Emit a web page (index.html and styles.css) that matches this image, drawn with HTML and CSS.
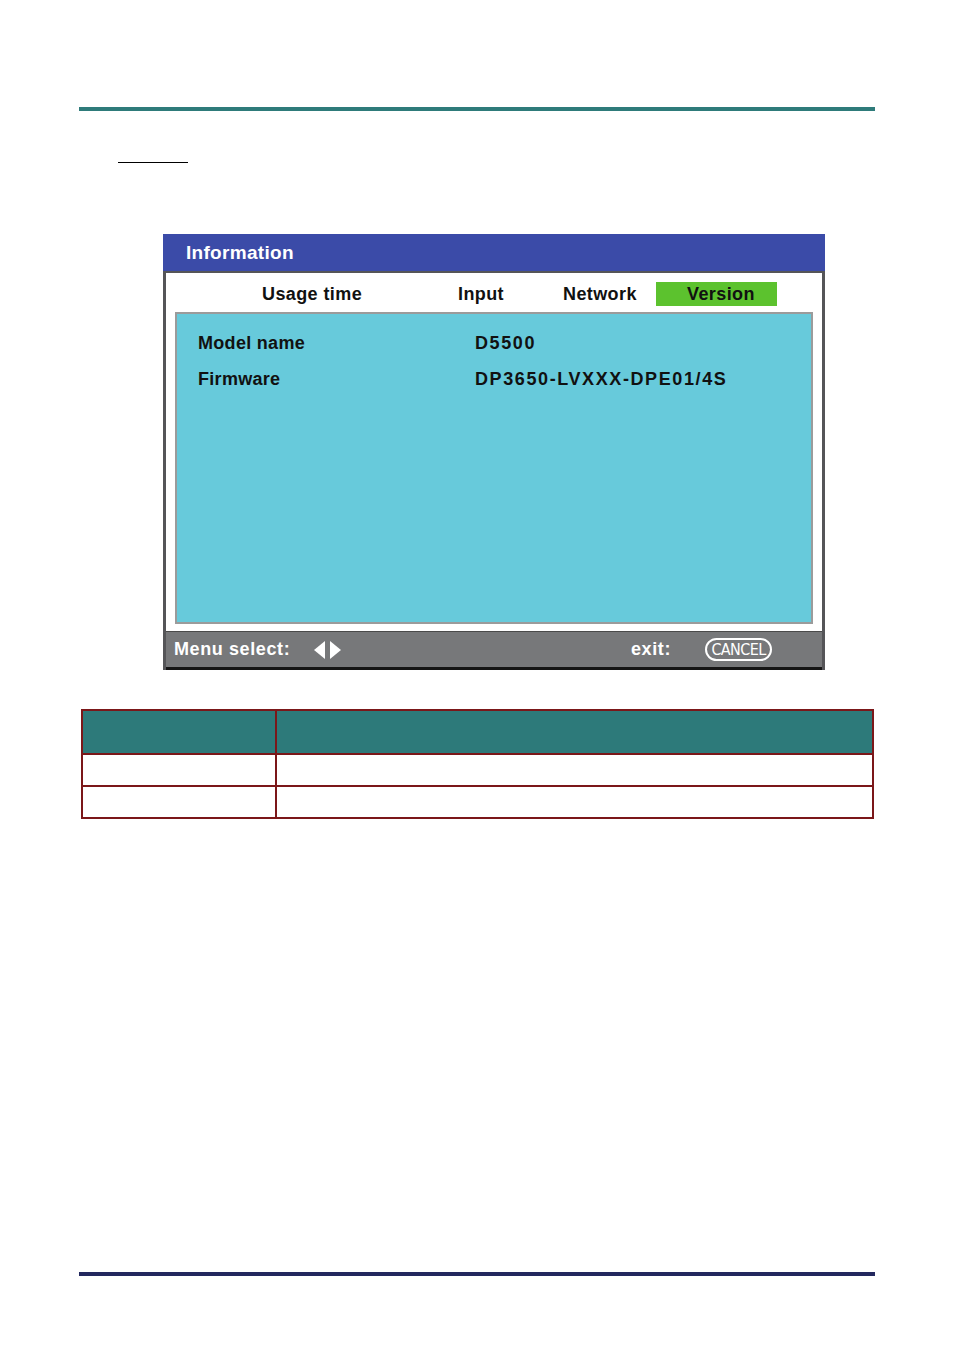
FILE: index.html
```html
<!DOCTYPE html>
<html>
<head>
<meta charset="utf-8">
<link rel="stylesheet" href="styles.css">
</head>
<body>
<div class="page">
  <div class="rule-top"></div>
  <div class="heading"></div>

  <div class="osd">
    <div class="osd-title">Information</div>
    <div class="osd-body">
      <div class="tabs">
        <span class="tab tab-usage">Usage time</span>
        <span class="tab tab-input">Input</span>
        <span class="tab tab-network">Network</span>
        <span class="tab tab-version">Version</span>
      </div>
      <div class="panel">
        <div class="row"><span class="label">Model name</span><span class="value">D5500</span></div>
        <div class="row"><span class="label">Firmware</span><span class="value">DP3650-LVXXX-DPE01/4S</span></div>
      </div>
      <div class="gap"></div>
      <div class="osd-bar">
        <span class="bar-label">Menu select:</span>
        <svg class="arrows" width="28" height="18" viewBox="0 0 28 18">
          <polygon points="11,0 11,18 0,9" fill="#ffffff"/>
          <polygon points="16,0 16,18 27,9" fill="#ffffff"/>
        </svg>
        <span class="bar-exit">exit:</span>
        <span class="cancel">CANCEL</span>
      </div>
    </div>
  </div>

  <table class="info-table">
    <tr class="head"><th class="c1"></th><th class="c2"></th></tr>
    <tr class="r1"><td class="c1"></td><td class="c2"></td></tr>
    <tr class="r2"><td class="c1"></td><td class="c2"></td></tr>
  </table>

  <div class="rule-bottom"></div>
</div>
</body>
</html>
```

FILE: styles.css
```css
* { box-sizing: border-box; }
html, body { margin: 0; padding: 0; background: #ffffff; }
body { font-family: "Liberation Sans", Arial, sans-serif; }

.page { width: 954px; height: 1350px; overflow: hidden; }

.rule-top {
  margin: 107px 0 0 79px;
  width: 796px;
  height: 4px;
  background: #2e7b7a;
}

.heading {
  margin-left: 118px;
  width: 70px;
  height: 52px;
  border-bottom: 1px solid #000;
}

.osd {
  margin: 71px 0 0 163px;
  width: 662px;
}

.osd-title {
  height: 37px;
  background: #3b4ba8;
  color: #ffffff;
  font-weight: bold;
  font-size: 19px;
  letter-spacing: 0.3px;
  padding-left: 23px;
  line-height: 37px;
}

.osd-body {
  background: #ffffff;
  border-left: 3px solid #555558;
  border-right: 3px solid #555558;
  border-top: 2px solid #555558;
}

.tabs {
  height: 39px;
  display: flex;
  align-items: center;
  padding: 3px 0 0 96px;
  font-weight: bold;
  font-size: 18px;
  letter-spacing: 0.4px;
  color: #111;
}
.tab { display: block; white-space: nowrap; }
.tab-usage { width: 196px; }
.tab-input { width: 105px; }
.tab-network { width: 93px; }
.tab-version {
  width: 121px;
  height: 24px;
  line-height: 25px;
  padding-left: 31px;
  background: #5cc22e;
}

.panel {
  margin: 0 9px;
  height: 312px;
  background: #67cadb;
  border: 2px solid #9b9b9b;
  padding: 11px 0 0 21px;
}
.row {
  display: flex;
  height: 36px;
  line-height: 36px;
  font-weight: bold;
  font-size: 18px;
  color: #111;
}
.label { width: 277px; letter-spacing: 0.3px; }
.value { letter-spacing: 1.6px; }

.gap { height: 7px; }

.osd-bar {
  height: 39px;
  background: #77787a;
  border-top: 1px solid #4a4a4a;
  border-bottom: 3px solid #151515;
  display: flex;
  align-items: center;
  color: #ffffff;
  font-weight: bold;
  font-size: 18px;
  letter-spacing: 0.6px;
  padding-left: 8px;
}
.bar-label { width: 140px; white-space: nowrap; }
.arrows { display: block; }
.bar-exit { margin-left: 289px; width: 74px; }
.cancel {
  width: 67px;
  height: 23px;
  border: 2px solid #ffffff;
  border-radius: 12px;
  font-family: "Liberation Sans Narrow", "DejaVu Sans Condensed", sans-serif;
  font-weight: normal;
  font-size: 16px;
  letter-spacing: -0.6px;
  line-height: 19px;
  text-align: center;
  white-space: nowrap;
}

.info-table {
  margin: 39px 0 0 81px;
  width: 793px;
  border-collapse: collapse;
  border: 2px solid #7b1719;
}
.info-table th, .info-table td {
  border: 2px solid #7b1719;
  padding: 0;
}
.info-table .c1 { width: 194px; }
.info-table .head th { height: 44px; background: #2d7a7a; }
.info-table .r1 td { height: 32px; }
.info-table .r2 td { height: 32px; }

.rule-bottom {
  margin: 453px 0 0 79px;
  width: 796px;
  height: 4px;
  background: #23285e;
}
```
